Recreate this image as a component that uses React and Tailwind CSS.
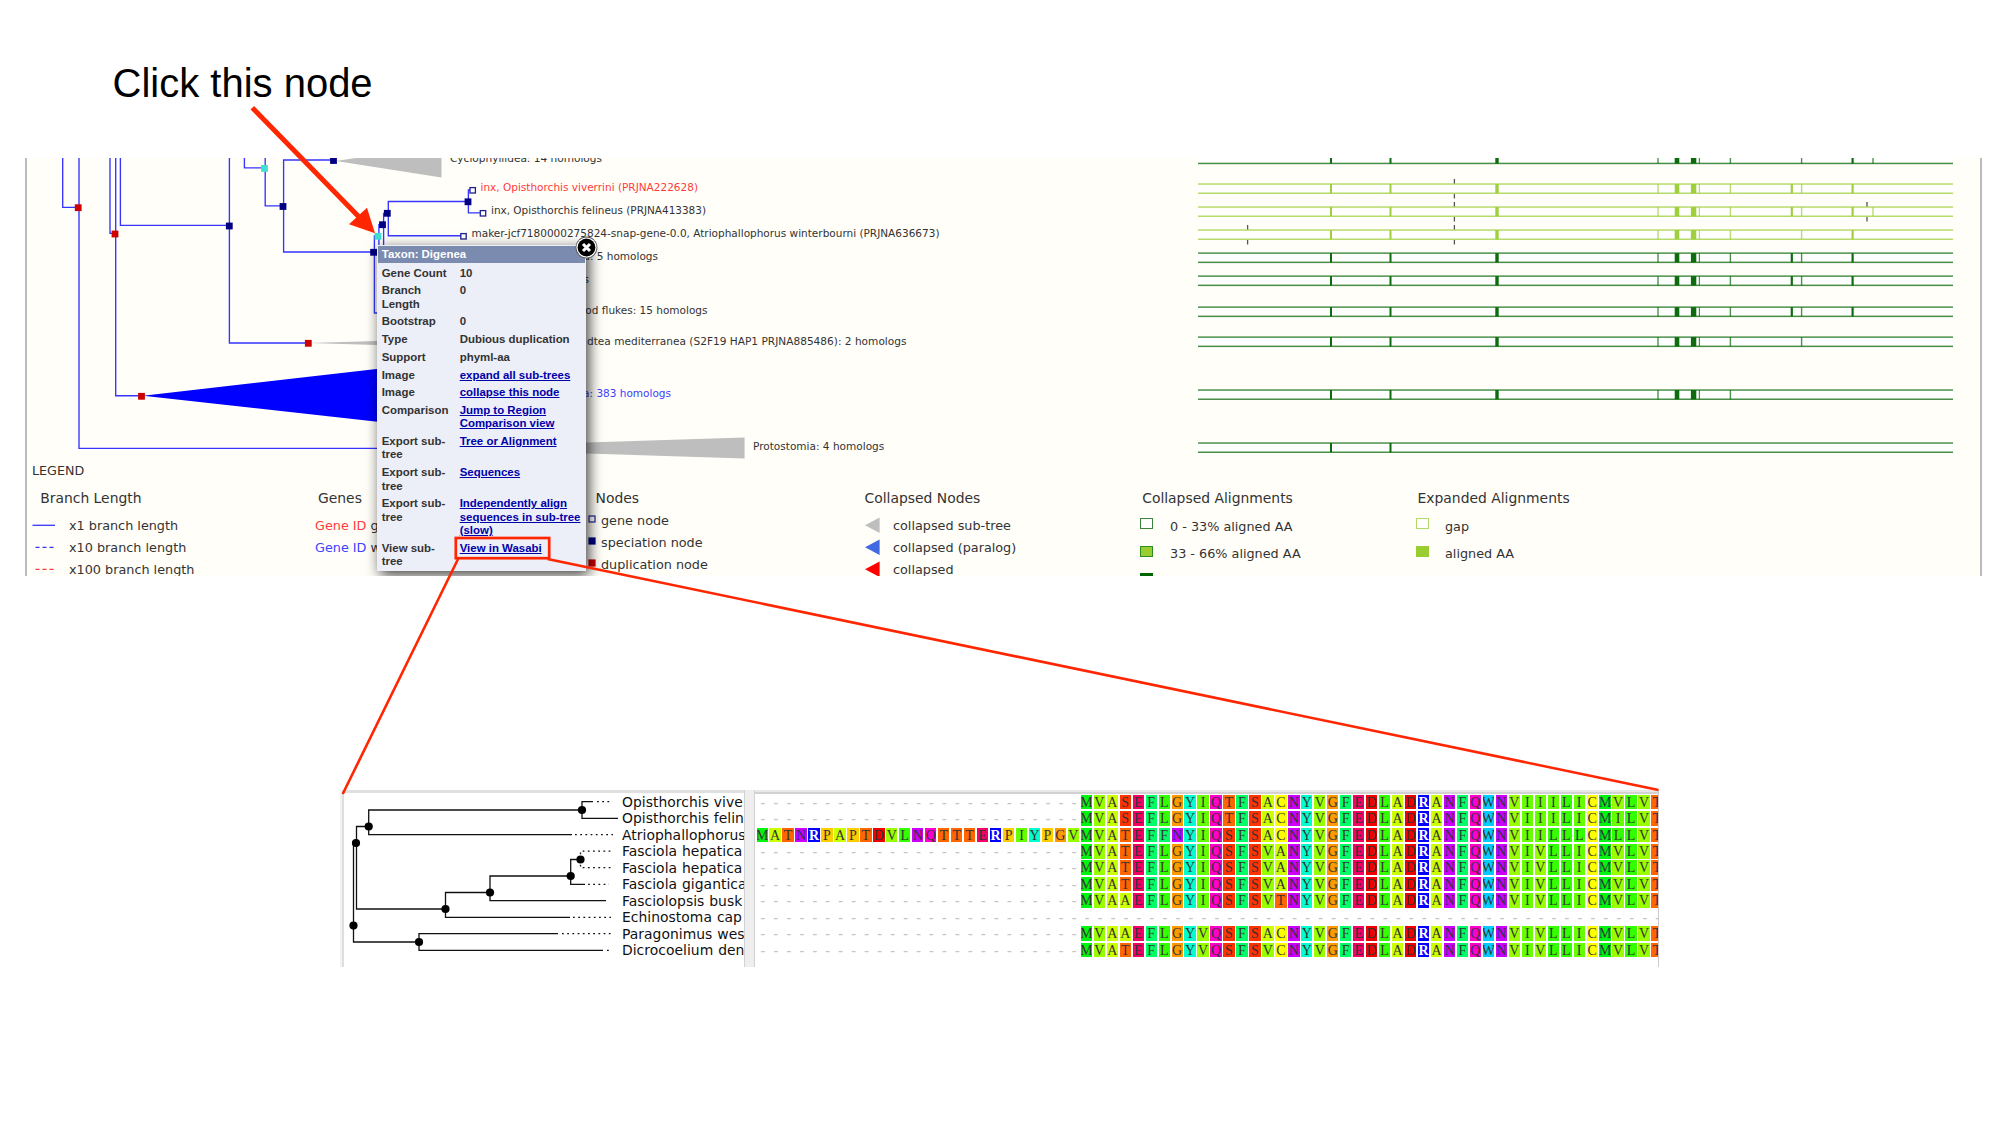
const BLUE = '#3535ff';

/* ---------- gene tree ---------- */
const branches = [
  'M62.7 150V207.3H78', 'M79 150V448.3H420', 'M110 150V233.3H115', 'M115.7 150V395.7H141',
  'M120.4 150V225.3H229', 'M229.4 150V343H308', 'M244.4 150V167.8H264', 'M265.2 150V205.8H283',
  'M333 160H283.6V252H373', 'M378 236H374.4V313H384', 'M382 224.7H378.9V250', 'M387 213.3H383.6V250',
  'M463 235.7H388.3V201.5H468', 'M472 190H468.4V212.8H480',
];
const nodes = [
  [78.2, 207.7, '#cc0000'], [115, 234, '#cc0000'], [308.3, 343.3, '#cc0000'], [141.5, 396.3, '#cc0000'],
  [229.3, 226, '#000080'], [283, 206.5, '#000080'], [333.5, 160.5, '#000080'], [373.6, 252.3, '#000080'],
  [382.5, 224.7, '#000080'], [387.3, 213.3, '#000080'], [468, 201.8, '#000080'],
  [264.5, 168.4, '#40e0d0'], [378, 236.3, '#40e0d0'],
];
const leaves = [[472.7, 190.3], [483, 213.3], [463.5, 236.3]];
const labels = [
  { x1: 450, x2: 602, y: 161.7, t: 'Cyclophyllidea: 14 homologs' },
  { x1: 480.5, x2: 698, y: 191.2, t: 'inx, Opisthorchis viverrini (PRJNA222628)', c: '#ff3b3b' },
  { x1: 491, x2: 706, y: 214.3, t: 'inx, Opisthorchis felineus (PRJNA413383)' },
  { x1: 471.5, x2: 939.5, y: 237.3, t: 'maker-jcf7180000275824-snap-gene-0.0, Atriophallophorus winterbourni (PRJNA636673)' },
  { x2: 658, y: 260.4, t: 'a: 5 homologs' },
  { x2: 589, y: 283.4, t: '2 homologs' },
  { x2: 707.5, y: 314.2, t: 'Blood flukes: 15 homologs' },
  { x1: 587, x2: 906.5, y: 344.6, t: 'dtea mediterranea (S2F19 HAP1 PRJNA885486): 2 homologs' },
  { x2: 671, y: 397.4, t: 'a: 383 homologs', c: '#4040ff' },
  { x1: 753, x2: 884.3, y: 450.2, t: 'Protostomia: 4 homologs' },
];

const G = '#006400';
const L = '#9acd32';
const base = [[1331, 2], [1390.5, 2], [1497, 3.4]];
const mid = [[1658, 1.4, 1], [1677, 4.6], [1693.6, 5.4], [1699.4, 1.2, 1], [1730.4, 1.4, 1]];
const a = [1791.8, 2.2];
const b = [1801.6, 1.4, 1];
const c = [1852.6, 2.2];
const d = [1873, 1.4, 1];
const tracks = [
  [154.3, G, [...base, ...mid, b, c, d]],
  [184.1, L, [...base, ...mid, a, b, c]],
  [207.1, L, [...base, ...mid, a, b, c, d]],
  [230.1, L, [...base, ...mid, b, c]],
  [253.2, G, [...base, ...mid, a, b, c]],
  [276.2, G, [...base, ...mid, a, b, c]],
  [307.2, G, [...base, ...mid, a, b, c]],
  [337.2, G, [...base, ...mid, b]],
  [390.1, G, [...base, ...mid]],
  [443.1, G, base.slice(0, 2)],
];
const inserts = [[1454.4, 184.1], [1454.4, 207.1], [1454.4, 230.1], [1247.6, 230.1], [1867, 207.1]];

function GeneTree() {
  return (
    <svg className="block h-[303px] w-[1953px] shrink-0" viewBox="27 158 1953 303" fontFamily="'DejaVu Sans', sans-serif" fontSize="10.5">
      <path d="M336 161L441.5 145V177.6Z M308 343L480 338V348Z M412 448L744.6 437.6V458.4Z" fill="#bebebe" />
      <path d="M143 395.7L577 346V444Z" fill="#0000ff" />
      {branches.map((p) => <path key={p} d={p} fill="none" stroke={BLUE} strokeWidth="1.35" />)}
      {nodes.map(([x, y, f]) => <rect key={x + '-' + y} x={x - 3.4} y={y - 3.4} width="6.8" height="6.8" fill={f} />)}
      {leaves.map(([x, y]) => (
        <rect key={y} x={x - 2.7} y={y - 2.7} width="5.4" height="5.4" fill="#fff" stroke="#20208f" strokeWidth="1.3" />
      ))}
      {labels.map((l) =>
        l.x1 ? (
          <text key={l.t} x={l.x1} y={l.y} fill={l.c || '#333'} textLength={l.x2 - l.x1} lengthAdjust="spacingAndGlyphs">{l.t}</text>
        ) : (
          <text key={l.t} x={l.x2} y={l.y} fill={l.c || '#333'} textAnchor="end">{l.t}</text>
        )
      )}
      {tracks.map(([y, col, ticks]) => (
        <g key={y} fill={col}>
          <rect x="1198" y={y} width="755" height="9.2" fill="#fff" />
          <rect x="1198" y={y - 0.9} width="755" height="1.7" opacity="0.62" />
          <rect x="1198" y={y + 8.4} width="755" height="1.5" opacity="0.72" />
          {ticks.map(([x, w, thin]) => (
            <rect key={x} x={x - w / 2} y={y} width={w} height="9.2" opacity={thin ? 0.7 : 0.95} />
          ))}
        </g>
      ))}
      {inserts.map(([x, y]) => (
        <path key={x + '-' + y} d={`M${x} ${y - 5.2}v4.6M${x} ${y + 9.8}v4.6`} stroke="#555" strokeWidth="1.3" />
      ))}
    </svg>
  );
}

/* ---------- legend ---------- */
function Column({ title, titleClass, itemsClass, children }) {
  return (
    <div>
      <div className={`h-[24px] text-[13.9px] leading-[24px] ${titleClass}`}>{title}</div>
      <div className={itemsClass}>{children}</div>
    </div>
  );
}

function LineItem({ color, dash, children }) {
  return (
    <div className="flex h-[22px] items-center pl-[5px] leading-[22px]">
      <svg className="mr-[14px] h-[22px] w-[23px]" viewBox="0 0 23 22">
        <path d={dash ? 'M3.5 10.3H22' : 'M0.5 10.3H23'} stroke={color} strokeWidth="1.3" strokeDasharray={dash ? '4 3' : undefined} />
      </svg>
      {children}
    </div>
  );
}

function NodeItem({ fill, stroke, children }) {
  return (
    <div className="flex h-[22px] leading-[22px]">
      <svg className="mr-[5px] h-[22px] w-[8px]" viewBox="0 0 8 22">
        <rect x="1" y="6" width="6" height="6" fill={fill} stroke={stroke} strokeWidth="1.2" />
      </svg>
      {children}
    </div>
  );
}

function TriItem({ fill, children }) {
  return (
    <div className="flex h-[22px] leading-[22px]">
      <svg className="mr-[13.5px] h-[22px] w-[15px]" viewBox="0 0 15 22">
        <path d="M0 10.3L14.6 2.6V18Z" fill={fill} />
      </svg>
      {children}
    </div>
  );
}

function BoxItem({ box, children }) {
  return (
    <div className="flex h-[27.5px] leading-[27.5px]">
      <span className={`mt-[5.7px] h-[11px] w-[12.5px] shrink-0 border ${box}`} />
      <span className="ml-[17.5px]">{children}</span>
    </div>
  );
}

function Legend() {
  return (
    <div className="text-[12.8px] text-[#333]">
      <div className="h-[20px] pl-[5px] text-[12.7px] leading-[20px]">LEGEND</div>
      <div className="mt-[4.9px] grid grid-cols-[288px_273px_276.5px_275.5px_276px_1fr] whitespace-nowrap">
        <Column title="Branch Length" titleClass="pl-[13.2px]" itemsClass="pt-[5px]">
          <LineItem color={BLUE}>x1 branch length</LineItem>
          <LineItem color={BLUE} dash>x10 branch length</LineItem>
          <LineItem color="#ff3b3b" dash>x100 branch length</LineItem>
        </Column>
        <Column title="Genes" titleClass="pl-[3px]" itemsClass="pt-[5px]">
          <div className="h-[22px] leading-[22px]"><span className="text-[#ff3b3b]">Gene ID</span> g</div>
          <div className="h-[22px] leading-[22px]"><span className="text-[#4040ff]">Gene ID</span> w</div>
        </Column>
        <Column title="Nodes" titleClass="pl-[7.5px]" itemsClass="">
          <NodeItem fill="#fff" stroke="#20208f">gene node</NodeItem>
          <NodeItem fill="#000080" stroke="#000080">speciation node</NodeItem>
          <NodeItem fill="#cc0000" stroke="#cc0000">duplication node</NodeItem>
        </Column>
        <Column title="Collapsed Nodes" titleClass="" itemsClass="pt-[5px]">
          <TriItem fill="#bebebe">collapsed sub-tree</TriItem>
          <TriItem fill="#4169e1">collapsed (paralog)</TriItem>
          <TriItem fill="#ff0000">collapsed</TriItem>
        </Column>
        <Column title="Collapsed Alignments" titleClass="pl-[2.2px]" itemsClass="pt-[2.8px]">
          <BoxItem box="border-[#3c853c] bg-white">0 - 33% aligned AA</BoxItem>
          <BoxItem box="border-[#2f8a20] bg-[#9acd32]">33 - 66% aligned AA</BoxItem>
          <BoxItem box="border-[#006400] bg-[#006400]">66 - 100% aligned AA</BoxItem>
        </Column>
        <Column title="Expanded Alignments" titleClass="pl-[1.5px]" itemsClass="pt-[2.8px]">
          <BoxItem box="border-[#b3da66] bg-white"><span className="-ml-px">gap</span></BoxItem>
          <BoxItem box="border-[#9acd32] bg-[#9acd32]"><span className="-ml-px">aligned AA</span></BoxItem>
        </Column>
      </div>
    </div>
  );
}

/* ---------- node popup ---------- */
const info = [
  ['Gene Count', '10'], ['Branch\nLength', '0'], ['Bootstrap', '0'], ['Type', 'Dubious duplication'],
  ['Support', 'phyml-aa'], ['Image', 'expand all sub-trees', 1], ['Image', 'collapse this node', 1],
  ['Comparison', 'Jump to Region\nComparison view', 1], ['Export sub-\ntree', 'Tree or Alignment', 1],
  ['Export sub-\ntree', 'Sequences', 1], ['Export sub-\ntree', 'Independently align\nsequences in sub-tree\n(slow)', 1],
  ['View sub-\ntree', 'View in Wasabi', 1],
];

function Popup() {
  return (
    <div className="absolute left-[350px] top-[87px] w-[209px] bg-[#eceef8] pl-[1.3px] pr-px pt-px font-['Liberation_Sans',sans-serif] text-[11.45px] font-bold leading-[13.35px] text-[#333] shadow-[3px_4px_13px_rgba(0,0,0,0.75)]">
      <div className="mb-[1.2px] h-[17.3px] bg-[#7b8bb0] pl-[3.5px] leading-[17.3px] text-white">Taxon: Digenea</div>
      {info.map(([k, v, link], i) => (
        <div key={i} className="flex whitespace-pre py-[2.2px] pl-[3.4px]">
          <div className="w-[78px] shrink-0">{k}</div>
          <div className={link ? 'text-[#0000a8] underline' : ''}>{v}</div>
        </div>
      ))}
      <svg className="absolute -top-[9.5px] left-[197.7px] h-[23px] w-[23px]" viewBox="0 0 23 23">
        <circle cx="11.5" cy="11.5" r="10.9" fill="#555" />
        <circle cx="11.5" cy="11.5" r="10.1" fill="#fff" />
        <circle cx="11.5" cy="11.5" r="8.9" fill="#000" />
        <path d="M8 8l7 7M15 8l-7 7" stroke="#fff" strokeWidth="3" />
      </svg>
    </div>
  );
}

/* ---------- alignment viewer ---------- */
const GAP25 = '-'.repeat(25);
const rows = [
  ['Opisthorchis vive', GAP25 + 'MVASEFLGYIQTFSACNYVGFEDLADRANFQWNVIIILICMVLVT'],
  ['Opisthorchis felin', GAP25 + 'MVASEFLGYIQTFSACNYVGFEDLADRANFQWNVIIILICMILVT'],
  ['Atriophallophorus', 'MATNRPAPTDVLNQTTTERPIYPGV' + 'MVATEFFNYIQSFSACNYVGFEDLADRANFQWNVIILLLCMLLVT'],
  ['Fasciola hepatica', GAP25 + 'MVATEFLGYIQSFSVANYVGFEDLADRANFQWNVIVLLICMVLVT'],
  ['Fasciola hepatica', GAP25 + 'MVATEFLGYIQSFSVANYVGFEDLADRANFQWNVIVLLICMVLVT'],
  ['Fasciola gigantica', GAP25 + 'MVATEFLGYIQSFSVANYVGFEDLADRANFQWNVIVLLICMVLVT'],
  ['Fasciolopsis busk', GAP25 + 'MVAAEFLGYIQSFSVTNYVGFEDLADRANFQWNVIVLLICMVLVT'],
  ['Echinostoma cap', '-'.repeat(70)],
  ['Paragonimus wes', GAP25 + 'MVAAEFLGYVQSFSACNYVGFEDLADRANFQWNVIVLLICMVLVT'],
  ['Dicrocoelium den', GAP25 + 'MVATEFLGYVQSFSVCNYVGFEDLADRANFQWNVIVLLICMVLVT'],
];
const residue = {
  A: 'bg-[#ccff00]', R: 'bg-[#0000ff]', N: 'bg-[#cc00ff]', D: 'bg-[#f20000]', C: 'bg-[#ffff00]',
  Q: 'bg-[#ff00cc]', E: 'bg-[#f80063]', G: 'bg-[#ff9900]', I: 'bg-[#66ff00]', L: 'bg-[#33ff00]',
  M: 'bg-[#00f510]', F: 'bg-[#00ff66]', P: 'bg-[#ffcc00]', S: 'bg-[#ff3300]', T: 'bg-[#ff6600]',
  W: 'bg-[#00ccff]', Y: 'bg-[#00ffcc]', V: 'bg-[#99ff00]',
};

const solid = 'M593 801.7H582V818.3H618M582 810H368.7V834.7H572M368.7 826.5H356.5V909H445.5M356 843H353.5V942H419M558 933.7H419V950.3H603M570 917.3H445.5V892.5H490M606 900.7H490V876H570.7M585 884.3H570.7V859.5H580.5';
const dotted = 'M597 801.7H612M575 834.7H613M580.5 859.5V851.2H612M580.5 859.5V867.7H613M588 884.3H609M573 917.3H611M562 933.7H611M607 950.3H609';
const joints = [[582, 810], [368.7, 826.5], [356, 843], [580.5, 859.5], [570.7, 876], [490, 892.5], [445.5, 909], [353.5, 925.6], [419, 942]];

function Wasabi() {
  return (
    <div className="ml-[340px] mt-[214px] h-[177px] w-[1319px] overflow-hidden">
      <div className="flex h-[177px]">
        <div className="w-[4px] shrink-0 border-r-2 border-[#dedede] bg-[#f2f2f2]" />
        <div className="flex w-[400px] shrink-0 border-t-[3px] border-[#e0e0e0] bg-white">
          <svg className="h-[174px] w-[278px] shrink-0" viewBox="344 793 278 174">
            <path d={solid} fill="none" stroke="#111" strokeWidth="1.3" />
            <path d={dotted} fill="none" stroke="#111" strokeWidth="1.3" strokeDasharray="1.8 3.4" />
            {joints.map(([x, y]) => <circle key={y} cx={x} cy={y} r="4.1" fill="#000" />)}
          </svg>
          <div className="w-[122px] overflow-hidden whitespace-nowrap pt-[0.8px] font-['DejaVu_Sans',sans-serif] text-[13.9px] tracking-[0.03px] text-[#111] [word-spacing:0.5px]">
            {rows.map(([name], i) => <div key={i} className="h-[16.5px] leading-[16.5px]">{name}</div>)}
          </div>
        </div>
        <div className="w-[11px] shrink-0 border-x border-[#d2d2d2] bg-[#eeeeee]" />
        <div className="w-[904px] overflow-hidden border-r border-[#cccccc] font-['Liberation_Serif',serif] text-[14px] text-[#333]">
          <div className="mb-[0.6px] h-[4px] border-b-2 border-[#d2d2d2] bg-[#e8e8e8]" />
          {rows.map(([, seq], i) => (
            <div key={i} className="grid h-[16.48px] w-[910px] grid-cols-[repeat(70,12.98px)] pl-[1.5px]">
              {seq.split('').map((ch, j) =>
                ch === '-' ? (
                  <span key={j} className="pl-[4px] text-[14px] font-bold leading-[16px] text-[#c4c4c4]">-</span>
                ) : (
                  <span key={j} className={`mr-[1.7px] flex h-[14.5px] justify-center overflow-hidden leading-[15px] ${ch === 'R' ? 'font-bold text-white' : ''} ${residue[ch]}`}>{ch}</span>
                )
              )}
            </div>
          ))}
        </div>
      </div>
    </div>
  );
}

export default function App() {
  return (
    <main className="relative h-[1125px] w-[2000px] overflow-hidden bg-white">
      <h1 className="h-[158px] pl-[112.5px] pt-[60px] font-['Liberation_Sans',sans-serif] text-[40px] leading-[46px] text-black">Click this node</h1>
      <section className="relative ml-[25px] h-[418px] w-[1957px] overflow-hidden border-x-2 border-[#bcbcbc] bg-[#fffef9] font-['DejaVu_Sans',sans-serif]">
        <GeneTree />
        <Legend />
        <Popup />
      </section>
      <Wasabi />
      <svg className="pointer-events-none absolute inset-0 h-[1125px] w-[2000px]" viewBox="0 0 2000 1125" fill="none" stroke="#ff2600">
        <path d="M252.3 107.7L361 219" strokeWidth="5" />
        <path d="M375 233.3L367 207.7L349 224.3Z" fill="#ff2600" stroke="none" />
        <rect x="455.8" y="538" width="93.4" height="20.2" strokeWidth="2.7" />
        <path d="M458.3 558.5L342.7 794M547.5 559L1658.5 790" strokeWidth="2.6" />
      </svg>
    </main>
  );
}
